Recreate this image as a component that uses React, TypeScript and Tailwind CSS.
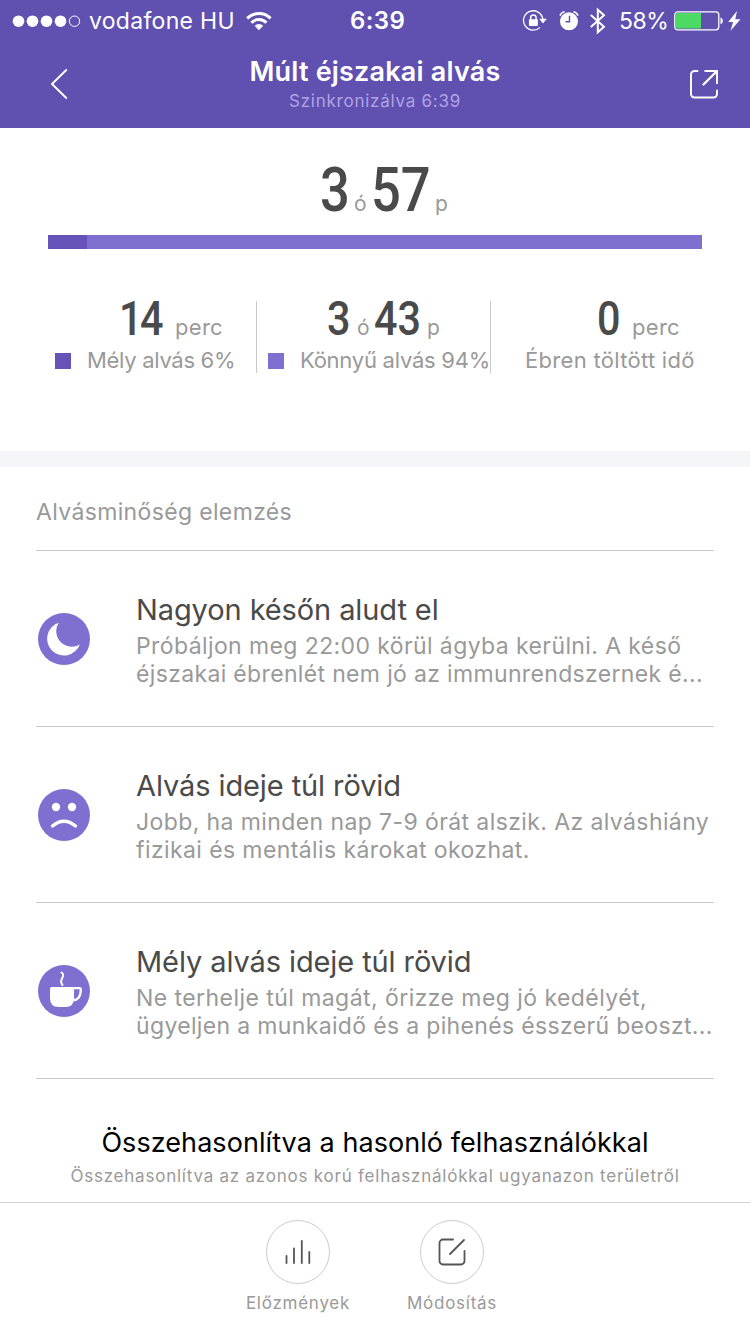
import type { ReactNode } from "react";

function Digits({ children, className }: { children: ReactNode; className: string }) {
  return (
    <span className={`block shrink-0 whitespace-nowrap font-[Roboto,sans-serif] font-medium text-[#4a4a4a] ${className}`}>
      <span className="inline-block origin-left scale-x-[0.86]">{children}</span>
    </span>
  );
}

function StatusBar() {
  return (
    <div className="flex h-[41px] items-center pl-[12px]">
      <svg width="70" height="14" viewBox="0 0 70 14" fill="#fff" className="shrink-0">
        <circle cx="6.5" cy="7.2" r="5.8" />
        <circle cx="20.5" cy="7.2" r="5.8" />
        <circle cx="34.5" cy="7.2" r="5.8" />
        <circle cx="48.5" cy="7.2" r="5.8" />
        <circle cx="62.5" cy="7.2" r="5.2" fill="none" stroke="#fff" />
      </svg>
      <span className="ml-[7px] w-[157px] shrink-0 pt-px text-[23px] leading-10 tracking-[0.3px]">vodafone HU</span>
      <svg width="26" height="20" viewBox="0 0 26 20" fill="none" stroke="#fff" strokeWidth="3" className="shrink-0">
        <path d="M1.2 7.4a16.3 16.3 0 0 1 23.4 0" />
        <path d="M5.4 11.8a10.4 10.4 0 0 1 15 0" />
        <path d="M12.9 19.2 8.6 14.8a6.1 6.1 0 0 1 8.6 0Z" fill="#fff" stroke="none" />
      </svg>
      <span className="ml-[78px] w-[172px] shrink-0 pt-px text-[24px] font-semibold leading-10 tracking-[0.4px]">6:39</span>
      <svg width="25" height="22" viewBox="0 0 25 22" fill="none" stroke="#fff" strokeWidth="1.3" className="shrink-0">
        <path d="M18 17.400A9.700 9.700 0 1 1 20.800 9" />
        <path d="M17.200 8.800h7.600l-3.800 4.800Z" fill="#fff" stroke="none" />
        <rect x="6.900" y="9.300" width="9" height="6.600" rx="0.8" fill="#fff" stroke="none" />
        <path d="M8.700 10V7.800a2.700 2.700 0 0 1 5.400 0V10" strokeWidth="1.5" />
      </svg>
      <svg width="20" height="22" viewBox="0 0 20 22" fill="none" stroke="#fff" className="ml-[12px] shrink-0">
        <circle cx="10" cy="11.300" r="9" fill="#fff" stroke="none" />
        <path d="M1 5.600a6 6 0 0 1 4.600-3.800M19 5.600a6 6 0 0 0-4.600-3.800" strokeWidth="1.6" />
        <path d="M10.500 5.800v6H6.500" stroke="#6050b0" strokeWidth="1.4" />
      </svg>
      <svg width="18" height="28" viewBox="0 0 18 28" fill="none" stroke="#fff" strokeWidth="2" className="ml-[10px] shrink-0">
        <path d="M1.8 8 15 19.8 8.8 25.2V2.8L15 8.2 1.8 20" />
      </svg>
      <span className="ml-[12px] w-[55px] shrink-0 whitespace-nowrap pt-px text-[23px] leading-10 tracking-[-0.5px]">58%</span>
      <svg width="68" height="22" viewBox="0 0 68 22" className="shrink-0">
        <rect x="0.8" y="1.8" width="44" height="18" rx="3" fill="none" stroke="#fff" strokeWidth="1.3" />
        <path d="M4 3h23v15.600H4a2 2 0 0 1-2-2V5a2 2 0 0 1 2-2Z" fill="#4cd964" />
        <path d="M46.500 7.500c3 .8 3 6 0 6.800Z" fill="#fff" />
        <path d="M63 1 54.200 12h4.900l-2.600 8.800L66.500 9.300h-5.200Z" fill="#fff" />
      </svg>
    </div>
  );
}

function Header() {
  return (
    <header className="h-32 shrink-0 overflow-hidden bg-[#6050b0] text-white">
      <StatusBar />
      <div className="flex h-[87px] items-start">
        <div className="w-[150px] pl-[50px] pt-[27px]">
          <svg width="20" height="32" viewBox="0 0 20 32" fill="none" stroke="#fff" strokeWidth="1.9" strokeLinejoin="round">
            <path d="M16.800 1.500 2 16l14.800 14.500" />
          </svg>
        </div>
        <div className="flex-1 text-center">
          <h1 className="mt-[14px] text-[27px] font-semibold leading-[34px] tracking-[0.2px]">Múlt éjszakai alvás</h1>
          <p className="text-[17px] leading-6 tracking-[0.75px] text-[#b0a3e6]">Szinkronizálva 6:39</p>
        </div>
        <div className="flex w-[150px] justify-end pr-[31px] pt-[28px]">
          <svg width="30" height="30" viewBox="0 0 30 30" fill="none" stroke="#fff" strokeWidth="1.9" strokeLinecap="round">
            <path d="M8.500 2H5.500A3.500 3.500 0 0 0 2 5.500v19.500A3.500 3.500 0 0 0 5.500 28.500h19a3.500 3.500 0 0 0 3.500-3.500v-3.500" />
            <path d="M15.500 2H28v13" strokeLinecap="butt" />
            <path d="M14.500 15.500 27.500 2.500" strokeWidth="2.300" />
          </svg>
        </div>
      </div>
    </header>
  );
}

function Summary() {
  return (
    <section className="h-[323px] shrink-0">
      <div className="flex h-[107px] items-baseline pl-[320px] text-[21px] text-[#999]">
        <Digits className="w-[34px] text-[61px] leading-[125px]">3</Digits>
        <span className="w-[17px]">ó</span>
        <Digits className="w-[64px] text-[61px] leading-[125px]">57</Digits>
        <span>p</span>
      </div>
      <div className="mx-12 flex h-[14px] bg-[#7f6fd0]">
        <div className="w-[39px] bg-[#6553b8]" />
      </div>
      <div className="ml-[22px] mr-[25px] mt-[52px] flex h-[72px] text-[22px] text-[#999]">
        <div className="w-[235px] shrink-0 border-r border-[#c9c9c9]">
          <div className="flex h-[46px] items-baseline pl-[97px]">
            <Digits className="w-[56px] text-[48px] leading-[36px] tracking-[-3px]">14</Digits>
            <span className="leading-none tracking-[0.3px]">perc</span>
          </div>
          <div className="flex h-[27px] items-center pl-[33px]">
            <i className="mr-[16px] size-4 shrink-0 bg-[#6553b8]" />
            <span className="whitespace-nowrap pb-[2px] leading-[26px] tracking-[-0.3px]">Mély alvás 6%</span>
          </div>
        </div>
        <div className="w-[234px] shrink-0 border-r border-[#c9c9c9]">
          <div className="flex h-[46px] items-baseline pl-[70px]">
            <Digits className="w-[30px] text-[48px] leading-[36px]">3</Digits>
            <span className="w-[17px] text-[21px] leading-none">ó</span>
            <Digits className="w-[53px] text-[48px] leading-[36px]">43</Digits>
            <span className="text-[21px] leading-none">p</span>
          </div>
          <div className="flex h-[27px] items-center pl-[11px]">
            <i className="mr-[16px] size-4 shrink-0 bg-[#7f6fd0]" />
            <span className="whitespace-nowrap pb-[2px] leading-[26px] tracking-[-0.25px]">Könnyű alvás 94%</span>
          </div>
        </div>
        <div className="flex-1">
          <div className="flex h-[46px] items-baseline pl-[106px]">
            <Digits className="w-[35px] text-[48px] leading-[36px]">0</Digits>
            <span className="leading-none tracking-[0.3px]">perc</span>
          </div>
          <div className="flex h-[27px] items-center pl-[34px]">
            <span className="whitespace-nowrap pb-[2px] leading-[26px] tracking-[0.3px]">Ébren töltött idő</span>
          </div>
        </div>
      </div>
    </section>
  );
}

function MoonIcon() {
  return (
    <svg width="52" height="52" viewBox="0 0 52 52">
      <circle cx="26" cy="26" r="26" fill="#7f6fd0" />
      <path d="M20.700 9.800A16.800 16.800 0 1 0 41.800 31.400 15.500 15.500 0 0 1 20.700 9.800Z" fill="#fff" />
    </svg>
  );
}

function SadIcon() {
  return (
    <svg width="52" height="52" viewBox="0 0 52 52">
      <circle cx="26" cy="26" r="26" fill="#7f6fd0" />
      <circle cx="18" cy="18" r="4.200" fill="#fff" />
      <circle cx="34" cy="18" r="4.200" fill="#fff" />
      <path d="M14.500 37Q26 27.500 37.500 37" fill="none" stroke="#fff" strokeWidth="3.400" strokeLinecap="round" />
    </svg>
  );
}

function CupIcon() {
  return (
    <svg width="52" height="52" viewBox="0 0 52 52">
      <circle cx="26" cy="26" r="26" fill="#7f6fd0" />
      <path d="M13.500 22h21q1.500 0 1.500 1.500V33q0 9-8.500 9h-7Q12 42 12 33v-9.500q0-1.500 1.500-1.500Z" fill="#fff" />
      <path d="M35 23.200h6.500q1.500 0 1.300 1.500-.3 10.800-8.300 10.300" fill="none" stroke="#fff" strokeWidth="2.300" />
      <path d="M23.500 7.500c5.500 4-4 6.500 1 12.500" fill="none" stroke="#fff" strokeWidth="2" strokeLinecap="round" />
    </svg>
  );
}

function Item({ icon, title, children }: { icon: ReactNode; title: string; children: ReactNode }) {
  return (
    <li className="flex h-[176px] border-b border-[#c9c9c9] pl-[2px]">
      <div className="w-[98px] shrink-0 pt-[62px]">{icon}</div>
      <div className="whitespace-nowrap pt-[40px]">
        <h3 className="text-[29px] leading-[38px] tracking-[-0.1px] text-[#4a4a4a]">{title}</h3>
        <div className="mt-[3px] text-[23px] leading-[28px] text-[#999]">{children}</div>
      </div>
    </li>
  );
}

function Analysis() {
  return (
    <section className="h-[751px] shrink-0 overflow-hidden border-t-16 border-[#f5f6f8]">
      <h2 className="mx-9 h-[84px] border-b border-[#c9c9c9] pt-[25px] text-[23px] leading-10 tracking-[0.35px] text-[#999]">
        Alvásminőség elemzés
      </h2>
      <ul className="mx-9">
        <Item icon={<MoonIcon />} title="Nagyon későn aludt el">
          <p className="tracking-[0.4px]">Próbáljon meg 22:00 körül ágyba kerülni. A késő</p>
          <p className="tracking-[0.34px]">éjszakai ébrenlét nem jó az immunrendszernek é...</p>
        </Item>
        <Item icon={<SadIcon />} title="Alvás ideje túl rövid">
          <p className="tracking-[0.4px]">Jobb, ha minden nap 7-9 órát alszik. Az alváshiány</p>
          <p className="tracking-[0.4px]">fizikai és mentális károkat okozhat.</p>
        </Item>
        <Item icon={<CupIcon />} title="Mély alvás ideje túl rövid">
          <p className="tracking-[0.44px]">Ne terhelje túl magát, őrizze meg jó kedélyét,</p>
          <p className="tracking-[0.34px]">ügyeljen a munkaidő és a pihenés ésszerű beoszt...</p>
        </Item>
      </ul>
      <div className="whitespace-nowrap text-center">
        <h2 className="mt-[44px] text-[27px] leading-10 tracking-[0.06px] text-black">Összehasonlítva a hasonló felhasználókkal</h2>
        <p className="mt-[1px] text-[17px] leading-6 tracking-[0.77px] text-[#999]">
          Összehasonlítva az azonos korú felhasználókkal ugyanazon területről
        </p>
      </div>
    </section>
  );
}

function BottomBar() {
  return (
    <nav className="flex h-[132px] shrink-0 justify-center border-t border-[#d0d0d0] pt-[17px] text-[17px] text-[#999]">
      <button className="flex w-[154px] flex-col items-center">
        <span className="flex size-16 items-center justify-center rounded-full border border-[#ccc]">
          <svg width="28" height="28" viewBox="0 0 28 28" stroke="#555" strokeWidth="1.800" strokeLinecap="round">
            <path d="M2.500 18v7M10 10.500V25M17.800 3v22M25.300 14v11" />
          </svg>
        </span>
        <span className="mt-[7px] leading-6 tracking-[0.75px]">Előzmények</span>
      </button>
      <button className="flex w-[154px] flex-col items-center">
        <span className="flex size-16 items-center justify-center rounded-full border border-[#ccc]">
          <svg width="30" height="30" viewBox="0 0 30 30" fill="none" stroke="#555" strokeWidth="1.800" strokeLinecap="round">
            <path d="M16 2.500H6A3.500 3.500 0 0 0 2.500 6v18A3.500 3.500 0 0 0 6 27.500h18a3.500 3.500 0 0 0 3.500-3.500V14" />
            <path d="M13 17 27 3" />
          </svg>
        </span>
        <span className="mt-[7px] leading-6 tracking-[0.75px]">Módosítás</span>
      </button>
    </nav>
  );
}

export default function App() {
  return (
    <div className="flex h-[1334px] w-[750px] flex-col overflow-hidden bg-white font-[Inter,sans-serif]">
      <Header />
      <Summary />
      <Analysis />
      <BottomBar />
    </div>
  );
}
